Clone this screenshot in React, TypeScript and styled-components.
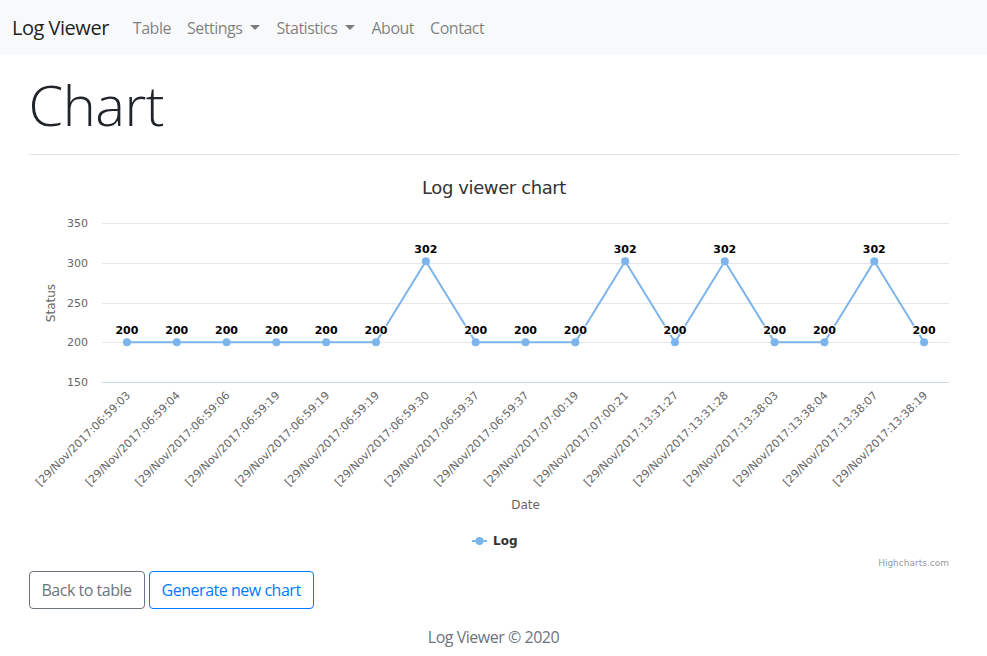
import React from 'react';
import styled, { createGlobalStyle, css } from 'styled-components';

const GlobalStyle = createGlobalStyle`
  html, body { margin: 0; padding: 0; background: #fff; }
  body {
    font-family: "Open Sans", "Noto Sans", sans-serif;
    color: #212529;
    font-size: 16px;
    line-height: 1.5;
    letter-spacing: -0.03em;
  }
  * { box-sizing: border-box; }
`;

const Navbar = styled.nav`
  display: flex;
  align-items: center;
  height: 55px;
  padding: 0 16px 0 12px;
  background: #f8f9fa;
`;

const Brand = styled.a`
  font-size: 20px;
  line-height: 30px;
  color: rgba(0, 0, 0, 0.9);
  margin-right: 16px;
  text-decoration: none;
`;

const NavList = styled.ul`
  display: flex;
  list-style: none;
  margin: 0;
  padding: 0;
`;

const NavLink = styled.a<{ $dropdown?: boolean }>`
  display: block;
  padding: 8px;
  color: rgba(0, 0, 0, 0.5);
  text-decoration: none;
  font-size: 16px;
  line-height: 24px;
  ${(p) =>
    p.$dropdown &&
    css`
      &::after {
        content: '';
        display: inline-block;
        margin-left: 8px;
        vertical-align: 4px;
        border-top: 5px solid;
        border-right: 5px solid transparent;
        border-left: 5px solid transparent;
        border-bottom: 0;
      }
    `}
`;

const Container = styled.main`
  width: 960px;
  margin: 0 auto;
  padding: 0 15px;
`;

const Title = styled.h1`
  font-size: 56px;
  font-weight: 300;
  line-height: 1.2;
  margin: 16px 0 8px;
  color: #212529;
`;

const Divider = styled.hr`
  border: 0;
  border-top: 1px solid rgba(0, 0, 0, 0.1);
  margin: 16px 0;
`;

const ChartBox = styled.div`
  height: 400px;
  width: 930px;
`;

const ChartSvg = styled.svg`
  display: block;
  font-family: "DejaVu Sans", Verdana, sans-serif;
  letter-spacing: normal;
`;

const ChartTitle = styled.text`
  font-size: 18px;
  fill: #333;
  letter-spacing: -0.4px;
`;

const AxisLabel = styled.text`
  font-size: 11px;
  fill: #666;
`;

const AxisTitle = styled.text`
  font-size: 12px;
  fill: #666;
`;

const DataLabel = styled.text`
  font-size: 11px;
  font-weight: bold;
  fill: #000;
  stroke: #fff;
  stroke-width: 2px;
  stroke-linejoin: round;
  paint-order: stroke;
`;

const LegendText = styled.text`
  font-size: 12px;
  font-weight: bold;
  fill: #333;
`;

const Credits = styled.text`
  font-size: 9px;
  fill: #999;
`;

const ButtonRow = styled.div`
  display: flex;
  gap: 4px;
`;

const Button = styled.button<{ $variant: 'secondary' | 'primary' }>`
  font-family: inherit;
  font-size: 16px;
  line-height: 24px;
  letter-spacing: inherit;
  padding: 6px 12px;
  border-radius: 4px;
  background: transparent;
  cursor: pointer;
  ${(p) =>
    p.$variant === 'secondary'
      ? css`
          color: #6c757d;
          border: 1px solid #6c757d;
        `
      : css`
          color: #007bff;
          border: 1px solid #007bff;
        `}
`;

const Footer = styled.footer`
  text-align: center;
  color: #6c757d;
  margin-top: 16px;
`;

const categories = [
  '[29/Nov/2017:06:59:03',
  '[29/Nov/2017:06:59:04',
  '[29/Nov/2017:06:59:06',
  '[29/Nov/2017:06:59:19',
  '[29/Nov/2017:06:59:19',
  '[29/Nov/2017:06:59:19',
  '[29/Nov/2017:06:59:30',
  '[29/Nov/2017:06:59:37',
  '[29/Nov/2017:06:59:37',
  '[29/Nov/2017:07:00:19',
  '[29/Nov/2017:07:00:21',
  '[29/Nov/2017:13:31:27',
  '[29/Nov/2017:13:31:28',
  '[29/Nov/2017:13:38:03',
  '[29/Nov/2017:13:38:04',
  '[29/Nov/2017:13:38:07',
  '[29/Nov/2017:13:38:19',
];
const values = [200, 200, 200, 200, 200, 200, 302, 200, 200, 200, 302, 200, 302, 200, 200, 302, 200];

const plotLeft = 73;
const plotTop = 52;
const plotW = 847;
const plotH = 159;
const yMin = 150;
const yMax = 350;

const xAt = (i: number) => plotLeft + ((i + 0.5) * plotW) / categories.length;
const yAt = (v: number) => plotTop + ((yMax - v) / (yMax - yMin)) * plotH;

const LogChart: React.FC = () => {
  const ticks = [350, 300, 250, 200, 150];
  const path = values.map((v, i) => `${i === 0 ? 'M' : 'L'}${xAt(i)} ${yAt(v)}`).join(' ');
  const bottom = plotTop + plotH;
  return (
    <ChartSvg width={930} height={400} viewBox="0 0 930 400">
      <ChartTitle x={465} y={23} textAnchor="middle">
        Log viewer chart
      </ChartTitle>
      {ticks.map((t) => (
        <g key={t}>
          <line
            x1={plotLeft}
            x2={plotLeft + plotW}
            y1={Math.round(yAt(t)) + 0.5}
            y2={Math.round(yAt(t)) + 0.5}
            stroke={t === 150 ? '#ccd6eb' : '#e6e6e6'}
            strokeWidth={1}
          />
          <AxisLabel x={59} y={Math.round(yAt(t)) + 4} textAnchor="end">
            {t}
          </AxisLabel>
        </g>
      ))}
      <AxisTitle transform="translate(26 132) rotate(-90)" textAnchor="middle">
        Status
      </AxisTitle>
      {categories.map((c, i) => (
        <AxisLabel
          key={i}
          transform={`translate(${xAt(i) + 4} ${bottom + 14}) rotate(-45)`}
          textAnchor="end"
        >
          {c}
        </AxisLabel>
      ))}
      <AxisTitle x={plotLeft + plotW / 2} y={338} textAnchor="middle">
        Date
      </AxisTitle>
      <path d={path} fill="none" stroke="#7cb5ec" strokeWidth={2} strokeLinejoin="round" />
      {values.map((v, i) => (
        <circle key={i} cx={xAt(i)} cy={yAt(v)} r={4} fill="#7cb5ec" />
      ))}
      {values.map((v, i) => (
        <DataLabel key={i} x={xAt(i)} y={yAt(v) - 8} textAnchor="middle">
          {v}
        </DataLabel>
      ))}
      <line x1={443} x2={458} y1={370} y2={370} stroke="#7cb5ec" strokeWidth={2} />
      <circle cx={450.5} cy={370} r={4} fill="#7cb5ec" />
      <LegendText x={464} y={374}>
        Log
      </LegendText>
      <Credits x={920} y={395} textAnchor="end">
        Highcharts.com
      </Credits>
    </ChartSvg>
  );
};

export default function App() {
  return (
    <>
      <GlobalStyle />
      <Navbar>
        <Brand href="#">Log Viewer</Brand>
        <NavList>
          <li><NavLink href="#">Table</NavLink></li>
          <li><NavLink href="#" $dropdown>Settings</NavLink></li>
          <li><NavLink href="#" $dropdown>Statistics</NavLink></li>
          <li><NavLink href="#">About</NavLink></li>
          <li><NavLink href="#">Contact</NavLink></li>
        </NavList>
      </Navbar>
      <Container>
        <Title>Chart</Title>
        <Divider />
        <ChartBox>
          <LogChart />
        </ChartBox>
        <ButtonRow>
          <Button $variant="secondary">Back to table</Button>
          <Button $variant="primary">Generate new chart</Button>
        </ButtonRow>
        <Footer>Log Viewer © 2020</Footer>
      </Container>
    </>
  );
}
